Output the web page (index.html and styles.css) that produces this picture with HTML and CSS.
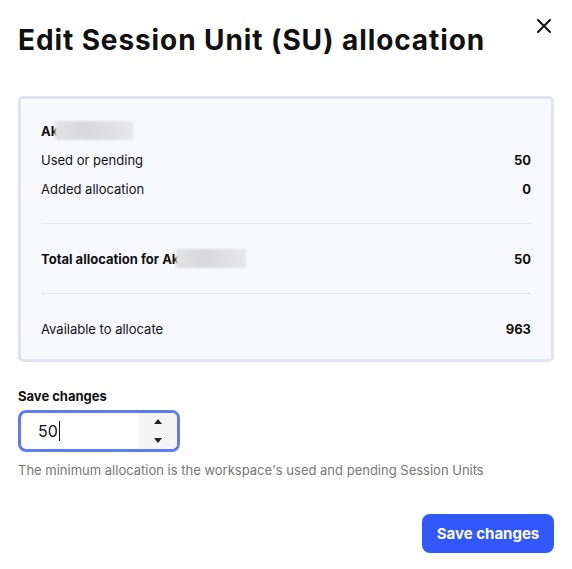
FILE: index.html
```html
<!DOCTYPE html>
<html>
<head>
<meta charset="utf-8">
<link rel="stylesheet" href="styles.css">
</head>
<body>
<div class="dialog">
  <div class="header">
    <h1 class="title">Edit Session Unit (SU) allocation</h1>
    <button class="close" aria-label="Close">
      <svg width="16" height="16" viewBox="0 0 16 16"><path d="M2 2 L14 14 M14 2 L2 14" stroke="#111" stroke-width="2" stroke-linecap="round"/></svg>
    </button>
  </div>
  <div class="card">
    <div class="row name-row"><span class="bold">Ak</span><span class="blur"></span></div>
    <div class="row"><span>Used or pending</span><span class="bold">50</span></div>
    <div class="row"><span>Added allocation</span><span class="bold">0</span></div>
    <div class="divider"></div>
    <div class="row"><span class="bold namewrap">Total allocation for Ak<span class="blur short"></span></span><span class="bold">50</span></div>
    <div class="divider"></div>
    <div class="row"><span>Available to allocate</span><span class="bold">963</span></div>
  </div>
  <label class="label">Save changes</label>
  <div class="input">
    <span class="value">50</span><span class="caret"></span>
    <div class="spin">
      <svg width="10" height="26" viewBox="0 0 10 26"><path d="M1 6 L5 1 L9 6 Z M1 20 L5 25 L9 20 Z" fill="#222"/></svg>
    </div>
  </div>
  <p class="help">The minimum allocation is the workspace's used and pending Session Units</p>
  <div class="footer"><button class="save">Save changes</button></div>
</div>
</body>
</html>
```
FILE: styles.css
```css
* { box-sizing: border-box; }
body {
  margin: 0;
  background: #fff;
  font-family: Inter, "Liberation Sans", sans-serif;
  color: #111;
}
.dialog {
  padding: 18px 18px 0 18px;
  width: 572px;
}
.header {
  display: flex;
  justify-content: space-between;
  align-items: flex-start;
  height: 78px;
}
.title {
  margin: 4px 0 0 0;
  font-size: 28px;
  line-height: 36px;
  font-weight: 700;
  letter-spacing: 0.9px;
  color: #111;
}
.close {
  border: none;
  background: none;
  padding: 0;
  margin: 0 2px 0 0;
  width: 16px;
  height: 16px;
  display: flex;
}
.card {
  border: 3px solid #dfe5f0;
  border-radius: 5px;
  background: #f8f9fd;
  padding: 17px 20px 16px 20px;
  font-size: 13px;
}
.row {
  display: flex;
  justify-content: space-between;
  align-items: center;
  height: 29px;
}
.name-row { justify-content: flex-start; }
.bold { font-weight: 700; }
.namewrap { display: flex; align-items: center; }
.blur {
  display: inline-block;
  width: 78px;
  height: 19px;
  margin-left: -3px;
  background: linear-gradient(90deg, #e2e2e4, #d8d8da 40%, #e8e8ea);
  filter: blur(1px);
}
.blur.short { width: 70px; }
.divider {
  height: 1px;
  background: #e3e6ec;
  margin: 20px 0;
}
.label {
  display: block;
  margin-top: 26px;
  font-size: 13px;
  line-height: 16px;
  font-weight: 700;
}
.input {
  margin-top: 6px;
  width: 162px;
  height: 42px;
  border: 3px solid #5b7cf2;
  border-radius: 8px;
  display: flex;
  align-items: center;
  padding-left: 17px;
  overflow: hidden;
}
.value { font-size: 16px; color: #111; }
.caret {
  width: 1px;
  height: 20px;
  background: #111;
  margin-left: 1px;
}
.spin {
  margin-left: auto;
  width: 38px;
  height: 100%;
  background: #f5f5f5;
  display: flex;
  align-items: center;
  justify-content: center;
}
.help {
  margin: 10px 0 0 0;
  font-size: 13px;
  line-height: 16px;
  color: #777;
}
.footer {
  display: flex;
  justify-content: flex-end;
  margin-top: 36px;
}
.save {
  background: #3158fb;
  color: #fff;
  border: none;
  border-radius: 8px;
  height: 39px;
  width: 132px;
  font-family: Inter, "Liberation Sans", sans-serif;
  font-size: 15px;
  font-weight: 700;
}
```
